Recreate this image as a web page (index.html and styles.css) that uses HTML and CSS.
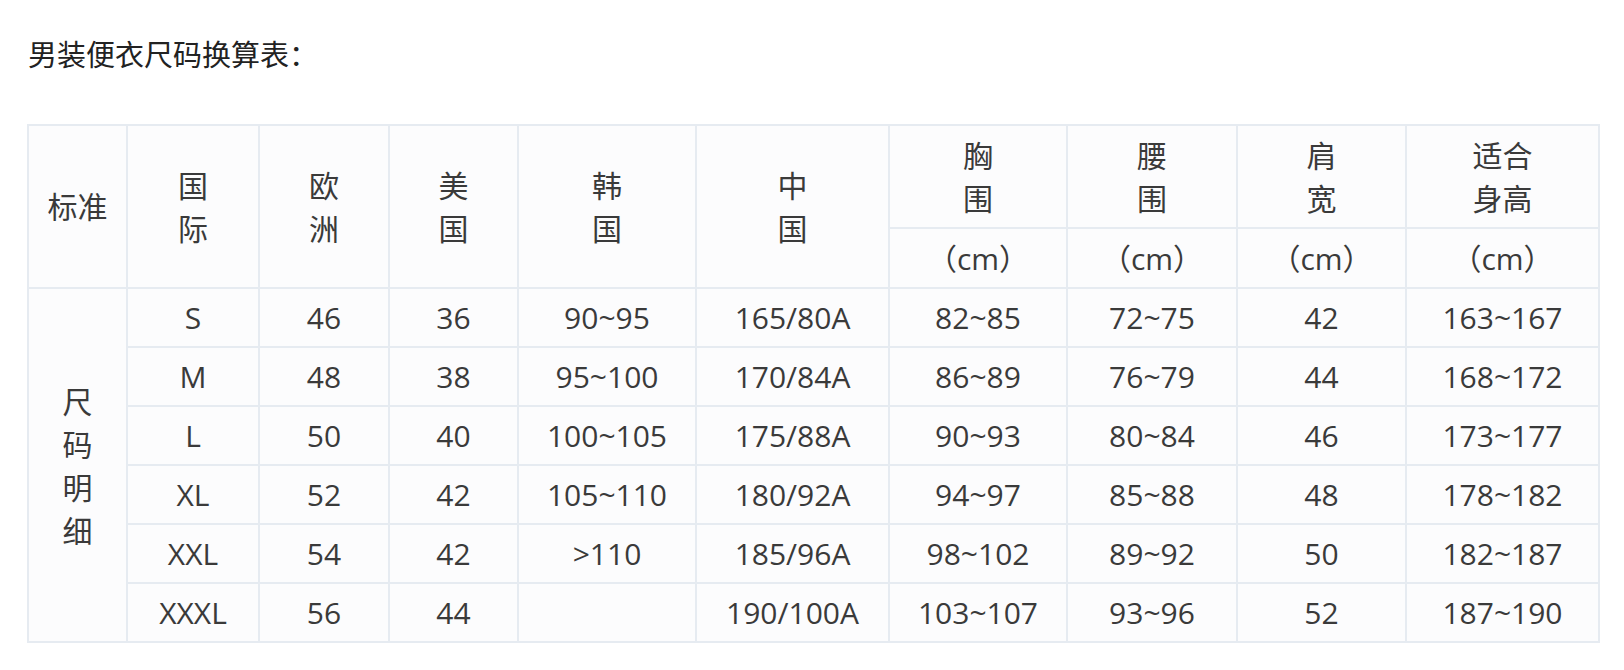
FILE: index.html
```html
<!DOCTYPE html>
<html lang="zh-CN">
<head>
<meta charset="utf-8">
<title>男装便衣尺码换算表</title>
<link rel="stylesheet" href="styles.css">
</head>
<body>
<p class="title">男装便衣尺码换算表：</p>
<div class="sheet">
<table class="size-table">
  <colgroup>
    <col class="c1"><col class="c2"><col class="c3"><col class="c4"><col class="c5">
    <col class="c6"><col class="c7"><col class="c8"><col class="c9"><col class="c10">
  </colgroup>
  <thead>
    <tr class="h-top">
      <th rowspan="2">标准</th>
      <th rowspan="2">国<br>际</th>
      <th rowspan="2">欧<br>洲</th>
      <th rowspan="2">美<br>国</th>
      <th rowspan="2">韩<br>国</th>
      <th rowspan="2">中<br>国</th>
      <th>胸<br>围</th>
      <th>腰<br>围</th>
      <th>肩<br>宽</th>
      <th>适合<br>身高</th>
    </tr>
    <tr class="h-unit">
      <th>（cm）</th>
      <th>（cm）</th>
      <th>（cm）</th>
      <th>（cm）</th>
    </tr>
  </thead>
  <tbody>
    <tr>
      <td rowspan="6" class="side">尺<br>码<br>明<br>细</td>
      <td>S</td><td>46</td><td>36</td><td>90~95</td><td>165/80A</td><td>82~85</td><td>72~75</td><td>42</td><td>163~167</td>
    </tr>
    <tr><td>M</td><td>48</td><td>38</td><td>95~100</td><td>170/84A</td><td>86~89</td><td>76~79</td><td>44</td><td>168~172</td></tr>
    <tr><td>L</td><td>50</td><td>40</td><td>100~105</td><td>175/88A</td><td>90~93</td><td>80~84</td><td>46</td><td>173~177</td></tr>
    <tr><td>XL</td><td>52</td><td>42</td><td>105~110</td><td>180/92A</td><td>94~97</td><td>85~88</td><td>48</td><td>178~182</td></tr>
    <tr><td>XXL</td><td>54</td><td>42</td><td>&gt;110</td><td>185/96A</td><td>98~102</td><td>89~92</td><td>50</td><td>182~187</td></tr>
    <tr><td>XXXL</td><td>56</td><td>44</td><td></td><td>190/100A</td><td>103~107</td><td>93~96</td><td>52</td><td>187~190</td></tr>
  </tbody>
</table>
</div>
</body>
</html>
```

FILE: styles.css
```css
html, body {
  margin: 0;
  padding: 0;
  background: #ffffff;
}

.title {
  margin: 0;
  padding: 37px 0 0 28px;
  font-family: "Noto Sans CJK SC", "Liberation Serif", serif;
  font-size: 29px;
  line-height: 32px;
  color: #222222;
}

.sheet {
  padding: 55px 0 0 27px;
}

.size-table {
  table-layout: fixed;
  width: 1571px;
  border-collapse: collapse;
  background: #fcfcfd;
  font-family: "Open Sans", "Noto Sans CJK SC", sans-serif;
  font-size: 30px;
  color: #3a3a3a;
}

.c1 { width: 99px; }
.c2 { width: 132px; }
.c3 { width: 130px; }
.c4 { width: 129px; }
.c5 { width: 178px; }
.c6 { width: 193px; }
.c7 { width: 178px; }
.c8 { width: 170px; }
.c9 { width: 169px; }
.c10 { width: 193px; }

.size-table th,
.size-table td {
  border: 2px solid #e6ebf1;
  padding: 0;
  text-align: center;
  vertical-align: middle;
  font-weight: normal;
  line-height: 43px;
}

.h-top th {
  height: 101px;
}

.h-unit th {
  height: 58px;
}

.size-table tbody td {
  height: 57px;
}

.side {
  font-family: "Noto Sans CJK SC", sans-serif;
}
```
